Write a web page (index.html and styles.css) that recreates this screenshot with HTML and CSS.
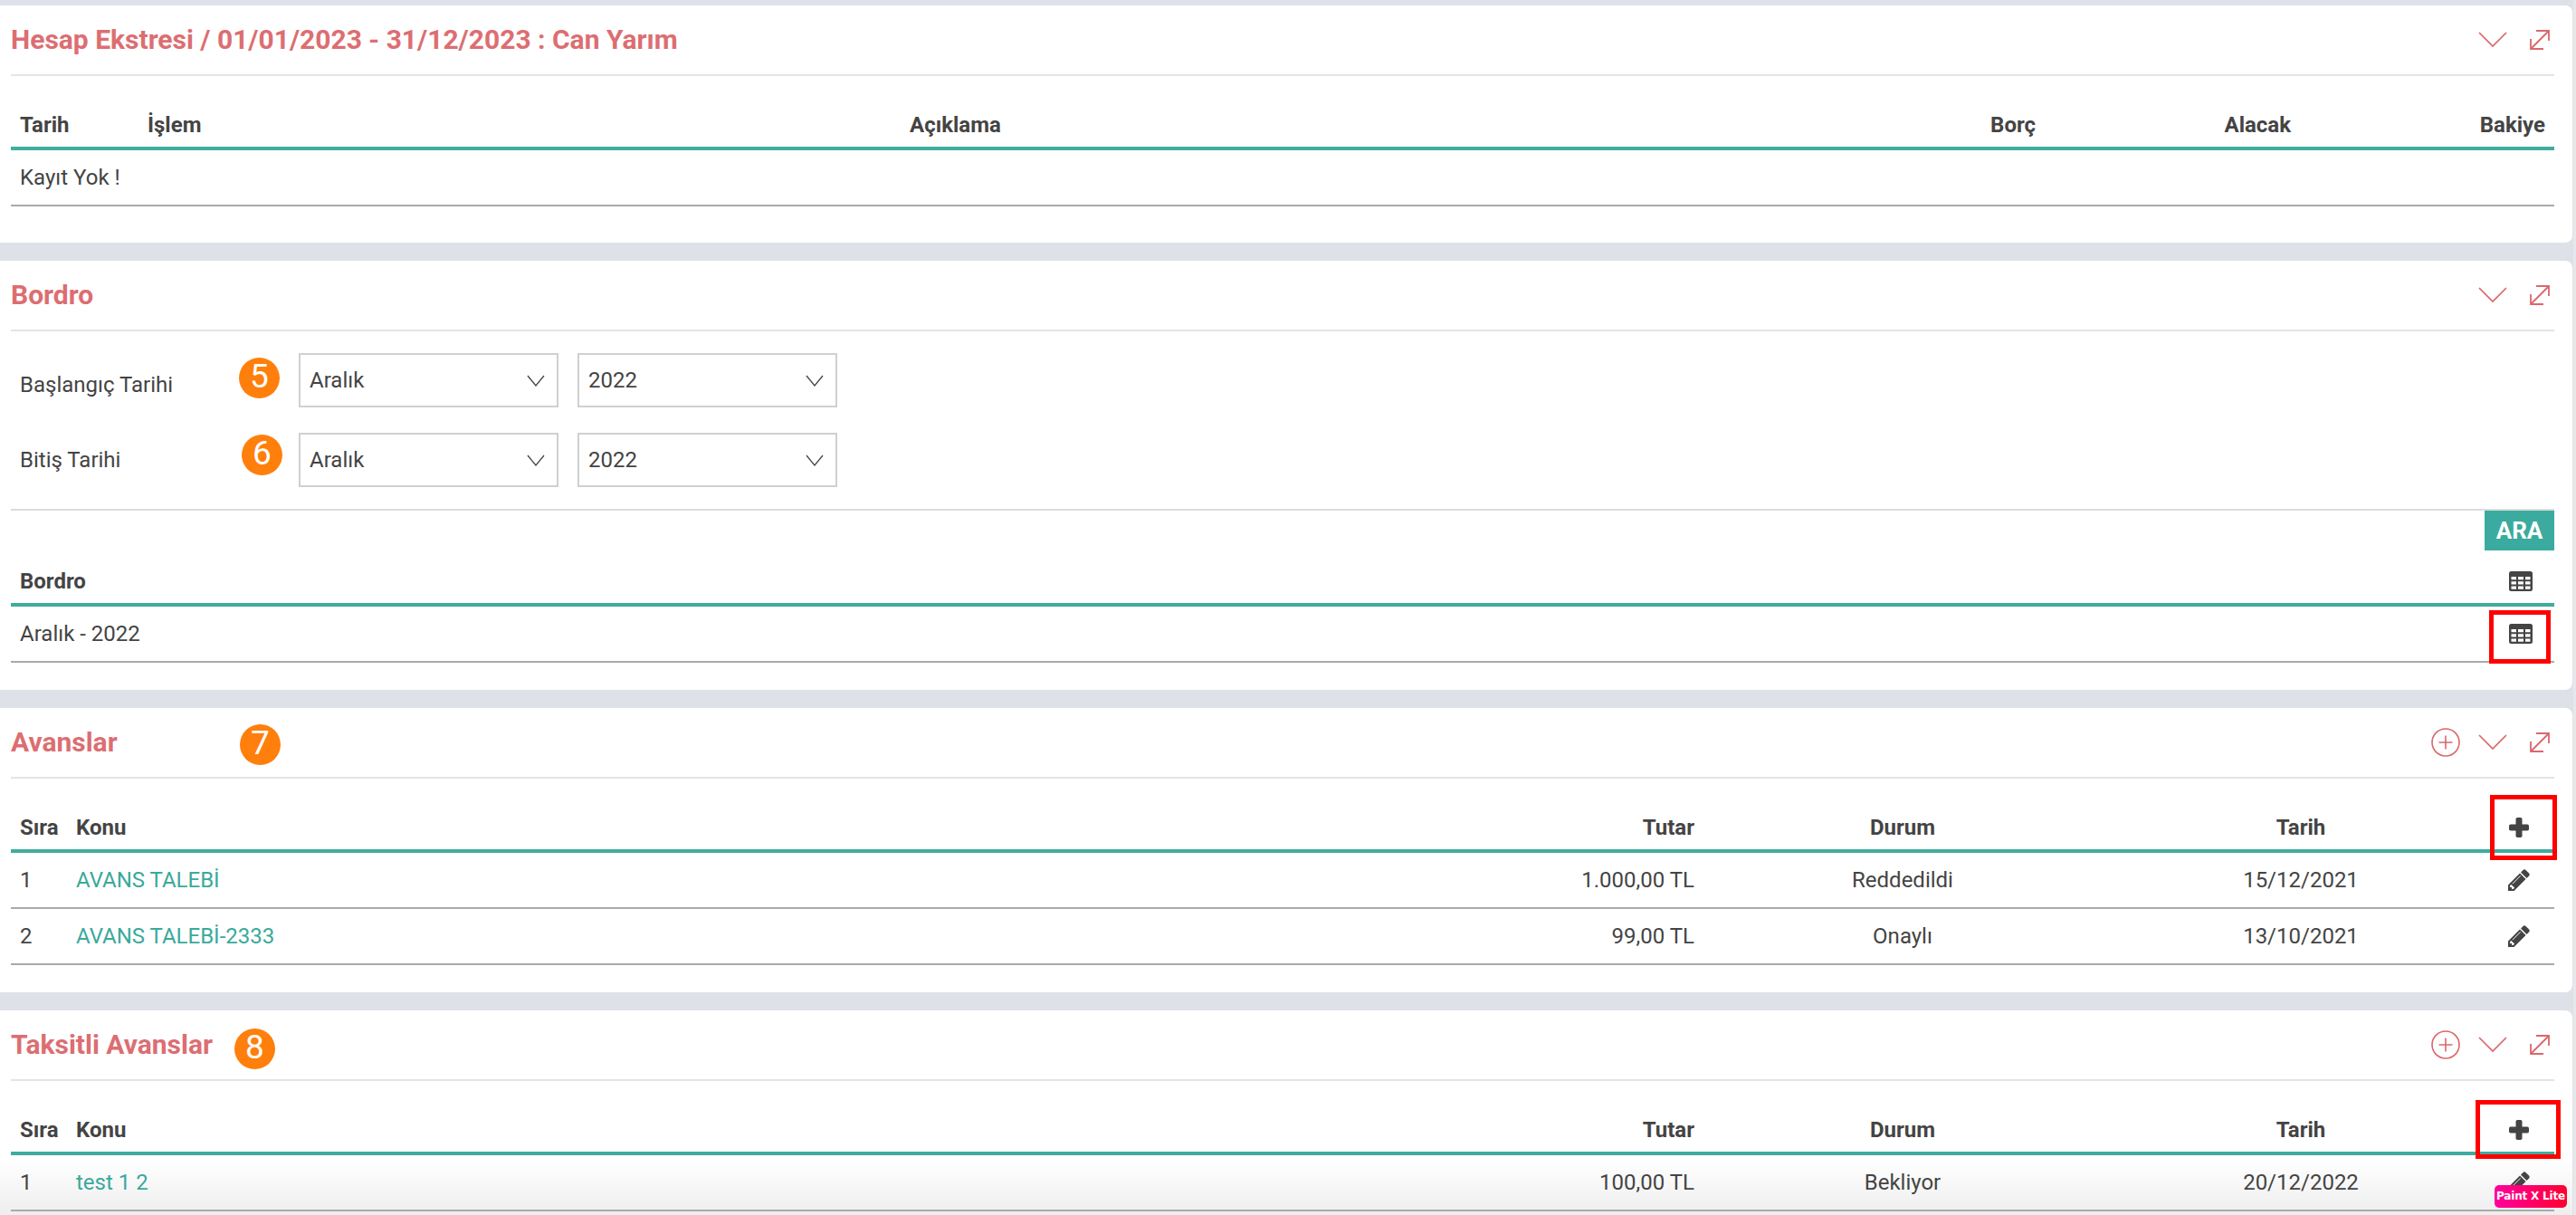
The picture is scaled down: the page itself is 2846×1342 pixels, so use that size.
FILE: index.html
```html
<!DOCTYPE html>
<html lang="tr">
<head>
    <meta charset="UTF-8">
    <meta name="viewport" content="width=device-width, initial-scale=1.0">
    <title>Hesap Ekstresi</title>
    <link rel="stylesheet" href="styles.css">
</head>
<body>

    <svg class="icon-defs" width="0" height="0">
        <symbol id="i-chevron" viewBox="0 0 32 18"><path d="M1 1L16 16L31 1" fill="none" stroke="currentColor" stroke-width="1.7"/></symbol>
        <symbol id="i-expand" viewBox="0 0 22 22"><path d="M7 1H21V12M21 1L1 21M1 10V21H15" fill="none" stroke="currentColor" stroke-width="1.8"/></symbol>
        <symbol id="i-add" viewBox="0 0 32 32"><circle cx="16" cy="16" r="15" fill="none" stroke="currentColor" stroke-width="1.6"/><path d="M16 8.5V23.500M8.500 16H23.500" fill="none" stroke="currentColor" stroke-width="1.6"/></symbol>
        <symbol id="i-table" viewBox="0 0 26 22"><path fill-rule="evenodd" d="M2.500 0H23.500Q26 0 26 2.500V19.500Q26 22 23.500 22H2.500Q0 22 0 19.500V2.500Q0 0 2.500 0ZM2.500 6V9.300H8V6ZM10 6V9.300H16V6ZM18 6V9.300H23.500V6ZM2.500 11.300V14.500H8V11.300ZM10 11.300V14.500H16V11.300ZM18 11.300V14.500H23.500V11.300ZM2.500 16.500V19.700H8V16.500ZM10 16.500V19.700H16V16.500ZM18 16.500V19.700H23.500V16.500Z"/></symbol>
        <symbol id="i-plus" viewBox="0 0 22 22"><rect x="7.500" y="0" width="7" height="22" rx="1.800"/><rect x="0" y="7.500" width="22" height="7" rx="1.800"/></symbol>
        <symbol id="i-pencil" viewBox="128 128 1536 1536"><path d="M491 1536l91-91-235-235-91 91v107h128v128h107zm523-928q0-22-22-22-10 0-17 7l-542 542q-7 7-7 17 0 22 22 22 10 0 17-7l542-542q7-7 7-17zm-54-192l416 416-832 832h-416v-416zm683 96q0 53-37 90l-166 166-416-416 166-165q36-38 90-38 53 0 91 38l235 234q37 39 37 91z"/></symbol>
        <symbol id="i-caret" viewBox="0 0 20 13"><path d="M1 1L10 12L19 1" fill="none" stroke="currentColor" stroke-width="1.300"/></symbol>
    </svg>

    <div class="page">
        <div class="page-content">

            <!-- Hesap ekstresi -->
            <section class="card card-statement">
                <div class="card-head">
                    <h2>Hesap Ekstresi / 01/01/2023 - 31/12/2023 : Can Yarım</h2>
                    <div class="card-tools">
                        <svg class="tool-chevron"><use href="#i-chevron"/></svg>
                        <svg class="tool-expand"><use href="#i-expand"/></svg>
                    </div>
                </div>
                <table class="data-table table-statement">
                    <thead>
                        <tr>
                            <th class="col-date">Tarih</th>
                            <th class="col-type">İşlem</th>
                            <th class="col-desc">Açıklama</th>
                            <th class="col-debt right">Borç</th>
                            <th class="col-credit right">Alacak</th>
                            <th class="col-balance right">Bakiye</th>
                        </tr>
                    </thead>
                    <tbody>
                        <tr><td colspan="6">Kayıt Yok !</td></tr>
                    </tbody>
                </table>
            </section>

            <!-- Bordro -->
            <section class="card">
                <div class="card-head">
                    <h2>Bordro</h2>
                    <div class="card-tools">
                        <svg class="tool-chevron"><use href="#i-chevron"/></svg>
                        <svg class="tool-expand"><use href="#i-expand"/></svg>
                    </div>
                </div>
                <div class="filter-form">
                    <div class="form-row form-row-start">
                        <label class="form-label">Başlangıç Tarihi</label>
                        <div class="select-box">Aralık <svg class="select-caret"><use href="#i-caret"/></svg></div>
                        <div class="select-box">2022 <svg class="select-caret"><use href="#i-caret"/></svg></div>
                    </div>
                    <div class="form-row">
                        <label class="form-label">Bitiş Tarihi</label>
                        <div class="select-box">Aralık <svg class="select-caret"><use href="#i-caret"/></svg></div>
                        <div class="select-box">2022 <svg class="select-caret"><use href="#i-caret"/></svg></div>
                    </div>
                </div>
                <div class="form-actions">
                    <button class="btn-search">ARA</button>
                </div>
                <table class="data-table table-payroll">
                    <thead>
                        <tr>
                            <th>Bordro</th>
                            <th class="col-action"><svg class="icon-table"><use href="#i-table"/></svg></th>
                        </tr>
                    </thead>
                    <tbody>
                        <tr>
                            <td>Aralık - 2022</td>
                            <td class="col-action"><svg class="icon-table"><use href="#i-table"/></svg></td>
                        </tr>
                    </tbody>
                </table>
                <span class="step step-5">5</span>
                <span class="step step-6">6</span>
                <span class="mark mark-payroll"></span>
            </section>

            <!-- Avanslar -->
            <section class="card">
                <div class="card-head">
                    <h2>Avanslar</h2>
                    <div class="card-tools">
                        <svg class="tool-add"><use href="#i-add"/></svg>
                        <svg class="tool-chevron"><use href="#i-chevron"/></svg>
                        <svg class="tool-expand"><use href="#i-expand"/></svg>
                    </div>
                </div>
                <table class="data-table table-advance">
                    <thead>
                        <tr>
                            <th class="col-no">Sıra</th>
                            <th class="col-subject">Konu</th>
                            <th class="col-amount right">Tutar</th>
                            <th class="col-status center">Durum</th>
                            <th class="col-day center">Tarih</th>
                            <th class="col-edit"><svg class="icon-plus"><use href="#i-plus"/></svg></th>
                        </tr>
                    </thead>
                    <tbody>
                        <tr>
                            <td>1</td>
                            <td><a href="#">AVANS TALEBİ</a></td>
                            <td class="right">1.000,00 TL</td>
                            <td class="center">Reddedildi</td>
                            <td class="center">15/12/2021</td>
                            <td class="col-edit"><svg class="icon-pencil"><use href="#i-pencil"/></svg></td>
                        </tr>
                        <tr>
                            <td>2</td>
                            <td><a href="#">AVANS TALEBİ-2333</a></td>
                            <td class="right">99,00 TL</td>
                            <td class="center">Onaylı</td>
                            <td class="center">13/10/2021</td>
                            <td class="col-edit"><svg class="icon-pencil"><use href="#i-pencil"/></svg></td>
                        </tr>
                    </tbody>
                </table>
                <span class="step step-7">7</span>
                <span class="mark mark-advance"></span>
            </section>

            <!-- Taksitli avanslar -->
            <section class="card card-faded">
                <div class="card-head">
                    <h2>Taksitli Avanslar</h2>
                    <div class="card-tools">
                        <svg class="tool-add"><use href="#i-add"/></svg>
                        <svg class="tool-chevron"><use href="#i-chevron"/></svg>
                        <svg class="tool-expand"><use href="#i-expand"/></svg>
                    </div>
                </div>
                <table class="data-table table-advance">
                    <thead>
                        <tr>
                            <th class="col-no">Sıra</th>
                            <th class="col-subject">Konu</th>
                            <th class="col-amount right">Tutar</th>
                            <th class="col-status center">Durum</th>
                            <th class="col-day center">Tarih</th>
                            <th class="col-edit"><svg class="icon-plus"><use href="#i-plus"/></svg></th>
                        </tr>
                    </thead>
                    <tbody>
                        <tr>
                            <td>1</td>
                            <td><a href="#">test 1 2</a></td>
                            <td class="right">100,00 TL</td>
                            <td class="center">Bekliyor</td>
                            <td class="center">20/12/2022</td>
                            <td class="col-edit"><svg class="icon-pencil"><use href="#i-pencil"/></svg></td>
                        </tr>
                    </tbody>
                </table>
                <span class="step step-8">8</span>
                <span class="mark mark-installment"></span>
            </section>

        </div>
        <div class="scroll-track"></div>
    </div>

    <div class="paint-tag">Paint X Lite</div>

</body>
</html>
```

FILE: styles.css
```css
* {
    box-sizing: border-box;
}

html,
body {
    margin: 0;
    height: 1342px;
    overflow: hidden;
}

body {
    position: relative;
    font-family: Roboto, Arial, sans-serif;
    font-size: 24px;
    line-height: 24px;
    color: #444;
    background-color: #dee1e7;
}

.icon-defs {
    position: absolute;
}

.page {
    display: flex;
    height: 1342px;
}

.page-content {
    width: 2842px;
    padding-top: 6px;
}

.scroll-track {
    flex: 1;
    margin-left: 1px;
    background-color: #e7e8ea;
}

/* cards */
.card {
    position: relative;
    margin-bottom: 20px;
    padding: 0 20px 30px 12px;
    background-color: white;
    border-radius: 0 8px 8px 0;
}

.card-statement {
    padding-bottom: 40px;
}

/* last card runs off the bottom of the window and fades out there */
.card-faded {
    background: linear-gradient(white 164px, #eeeeee 226px);
}

.card-head {
    display: flex;
    align-items: center;
    justify-content: space-between;
    height: 78px;
    padding-right: 5px;
    border-bottom: 2px solid #e4e4e4;
}

.card-head h2 {
    margin: 0;
    font-size: 30px;
    font-weight: 700;
    color: #dc6e72;
}

.card-tools {
    display: flex;
    align-items: center;
    color: #d9686c;
}

.tool-add {
    width: 32px;
    height: 32px;
    margin-right: 20px;
}

.tool-chevron {
    width: 32px;
    height: 18px;
}

.tool-expand {
    width: 22px;
    height: 22px;
    margin-left: 25px;
}

/* tables */
.data-table {
    width: 100%;
    margin-top: 30px;
    table-layout: fixed;
    border-collapse: separate;
    border-spacing: 0;
}

.data-table th {
    height: 52px;
    padding: 12px 10px;
    font-weight: 700;
    text-align: left;
    border-bottom: 4px solid #3fac9f;
}

.data-table td {
    height: 62px;
    padding: 18px 10px;
    border-bottom: 2px solid #aaa;
}

.data-table th.right,
.data-table td.right {
    text-align: right;
}

.data-table th.center,
.data-table td.center {
    text-align: center;
}

.data-table a {
    color: #3aa99b;
    text-decoration: none;
}

.data-table svg {
    display: block;
    fill: #444;
}

.col-date { width: 141px; }
.col-type { width: 842px; }
.col-desc { width: 1005px; }
.col-debt { width: 259px; }
.col-credit { width: 282px; }
.col-balance { width: 281px; }

.col-no { width: 62px; }
.col-subject { width: 1526px; }
.col-amount { width: 282px; }
.col-status { width: 440px; }
.col-day { width: 440px; }
.col-edit { width: 60px; }

.table-payroll {
    margin-top: 10px;
}

.data-table .col-action {
    width: 60px;
    padding: 0 14px 0 0;
}

.icon-table {
    width: 26px;
    height: 22px;
    margin: 0 auto;
}

.data-table .col-edit {
    padding: 0 18px 0 0;
}

.icon-plus {
    width: 22px;
    height: 22px;
    margin: 0 auto;
}

.icon-pencil {
    width: 24px;
    height: 24px;
    margin: 0 auto;
}

/* bordro filter */
.filter-form {
    display: flex;
    flex-direction: column;
    gap: 28px;
    padding: 24px 0;
    border-bottom: 2px solid #dcdcdc;
}

.form-row {
    display: flex;
    align-items: center;
    gap: 21px;
}

.form-label {
    width: 297px;
    padding-left: 10px;
}

.form-row-start .form-label {
    padding-top: 10px;
}

.select-box {
    display: flex;
    align-items: center;
    justify-content: space-between;
    width: 287px;
    height: 60px;
    padding: 0 13px 0 10px;
    background-color: white;
    border: 2px solid #d0d0d0;
}

.select-caret {
    width: 20px;
    height: 13px;
    color: #444;
}

.form-actions {
    display: flex;
    justify-content: flex-end;
}

.btn-search {
    width: 77px;
    height: 44px;
    padding: 0;
    font-family: inherit;
    font-size: 26px;
    font-weight: 700;
    color: white;
    background-color: #3aab9e;
    border: none;
}

/* annotations drawn on top of the screenshot */
.step {
    position: absolute;
    display: flex;
    align-items: center;
    justify-content: center;
    width: 45px;
    height: 45px;
    padding-bottom: 3px;
    font-size: 37px;
    font-weight: 400;
    color: white;
    background-color: #ff7f0c;
    border-radius: 50%;
}

.step-5 { left: 264px; top: 107px; }
.step-6 { left: 267px; top: 192px; }
.step-7 { left: 265px; top: 18px; }
.step-8 { left: 259px; top: 20px; }

.mark {
    position: absolute;
    border: 5px solid #f00;
}

.mark-payroll { left: 2750px; top: 386px; width: 68px; height: 59px; }
.mark-advance { left: 2751px; top: 96px; width: 74px; height: 72px; }
.mark-installment { left: 2735px; top: 99px; width: 94px; height: 65px; }

.paint-tag {
    position: absolute;
    left: 2756px;
    top: 1309px;
    width: 80px;
    height: 25px;
    font-family: "DejaVu Sans", sans-serif;
    font-size: 12px;
    font-weight: 700;
    letter-spacing: -0.2px;
    line-height: 25px;
    text-align: center;
    white-space: nowrap;
    color: white;
    background: linear-gradient(90deg, #ff00a0, #ff0030);
    border-radius: 5px;
}
```
